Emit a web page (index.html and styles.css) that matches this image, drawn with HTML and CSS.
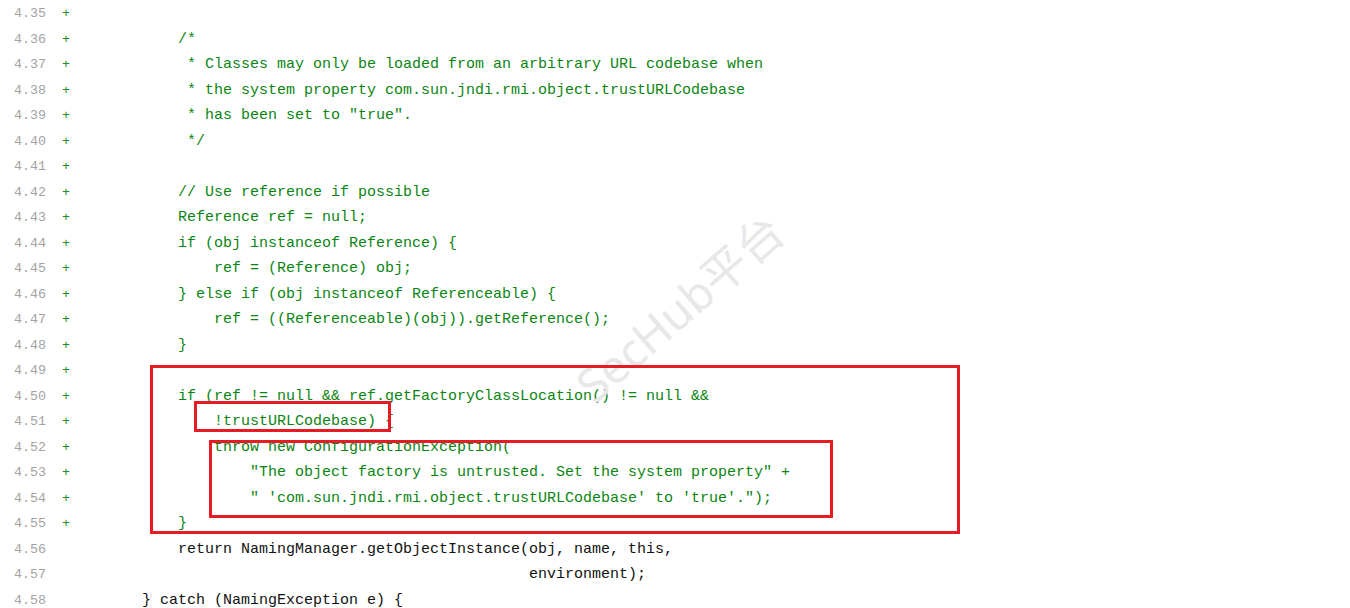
FILE: index.html
```html
<!DOCTYPE html>
<html lang="zh">
<head>
  <meta charset="UTF-8">
  <title>Diff</title>
  <link rel="stylesheet" href="styles.css">
</head>
<body>
  <div class="diff">
    <div class="watermark">SecHub平台</div>

    <div class="row add"><span class="num">4.35</span><span class="sign">+</span><span class="code"></span></div>
    <div class="row add"><span class="num">4.36</span><span class="sign">+</span><span class="code">            /*</span></div>
    <div class="row add"><span class="num">4.37</span><span class="sign">+</span><span class="code">             * Classes may only be loaded from an arbitrary URL codebase when</span></div>
    <div class="row add"><span class="num">4.38</span><span class="sign">+</span><span class="code">             * the system property com.sun.jndi.rmi.object.trustURLCodebase</span></div>
    <div class="row add"><span class="num">4.39</span><span class="sign">+</span><span class="code">             * has been set to "true".</span></div>
    <div class="row add"><span class="num">4.40</span><span class="sign">+</span><span class="code">             */</span></div>
    <div class="row add"><span class="num">4.41</span><span class="sign">+</span><span class="code"></span></div>
    <div class="row add"><span class="num">4.42</span><span class="sign">+</span><span class="code">            // Use reference if possible</span></div>
    <div class="row add"><span class="num">4.43</span><span class="sign">+</span><span class="code">            Reference ref = null;</span></div>
    <div class="row add"><span class="num">4.44</span><span class="sign">+</span><span class="code">            if (obj instanceof Reference) {</span></div>
    <div class="row add"><span class="num">4.45</span><span class="sign">+</span><span class="code">                ref = (Reference) obj;</span></div>
    <div class="row add"><span class="num">4.46</span><span class="sign">+</span><span class="code">            } else if (obj instanceof Referenceable) {</span></div>
    <div class="row add"><span class="num">4.47</span><span class="sign">+</span><span class="code">                ref = ((Referenceable)(obj)).getReference();</span></div>
    <div class="row add"><span class="num">4.48</span><span class="sign">+</span><span class="code">            }</span></div>
    <div class="row add"><span class="num">4.49</span><span class="sign">+</span><span class="code"></span></div>
    <div class="row add"><span class="num">4.50</span><span class="sign">+</span><span class="code">            if (ref != null &amp;&amp; ref.getFactoryClassLocation() != null &amp;&amp;</span></div>
    <div class="row add"><span class="num">4.51</span><span class="sign">+</span><span class="code">                !trustURLCodebase) {</span></div>
    <div class="row add"><span class="num">4.52</span><span class="sign">+</span><span class="code">                throw new ConfigurationException(</span></div>
    <div class="row add"><span class="num">4.53</span><span class="sign">+</span><span class="code">                    "The object factory is untrusted. Set the system property" +</span></div>
    <div class="row add"><span class="num">4.54</span><span class="sign">+</span><span class="code">                    " 'com.sun.jndi.rmi.object.trustURLCodebase' to 'true'.");</span></div>
    <div class="row add"><span class="num">4.55</span><span class="sign">+</span><span class="code">            }</span></div>
    <div class="row"><span class="num">4.56</span><span class="sign"></span><span class="code">            return NamingManager.getObjectInstance(obj, name, this,</span></div>
    <div class="row"><span class="num">4.57</span><span class="sign"></span><span class="code">                                                   environment);</span></div>
    <div class="row"><span class="num">4.58</span><span class="sign"></span><span class="code">        } catch (NamingException e) {</span></div>

    <!-- annotation boxes -->
    <div class="mark mark-outer"></div>
    <div class="mark mark-cond"></div>
    <div class="mark mark-throw"></div>
  </div>
</body>
</html>
```

FILE: styles.css
```css
body { margin: 0; background: #fff; }
.diff { position: relative; height: 608px; overflow: hidden; font-family: "Liberation Mono", "DejaVu Sans Mono", monospace; }

.row { display: flex; height: 25.5px; line-height: 25.5px; padding-top: 1px; box-sizing: border-box; }
.num { width: 62px; padding-left: 14px; box-sizing: border-box; flex: none; font-size: 13.33px; color: #a3a3a3; }
.sign { width: 8px; flex: none; font-size: 13.33px; color: #1a8f1a; }
.code { white-space: pre; font-size: 15px; color: #111; }
.add .code { color: #0b8512; }

.watermark { position: absolute; left: 550px; top: 273px; transform: rotate(-41deg); transform-origin: center; font-family: "Noto Sans", "Noto Sans CJK SC", sans-serif; font-size: 46px; color: #e8e8e8; white-space: nowrap; }

.mark { position: absolute; border: 3px solid #e81b24; box-sizing: border-box; }
.mark-outer { left: 150px; top: 365px; width: 810px; height: 169px; }
.mark-cond { left: 194px; top: 401px; width: 197px; height: 31px; }
.mark-throw { left: 209px; top: 440px; width: 624px; height: 78px; }
```
